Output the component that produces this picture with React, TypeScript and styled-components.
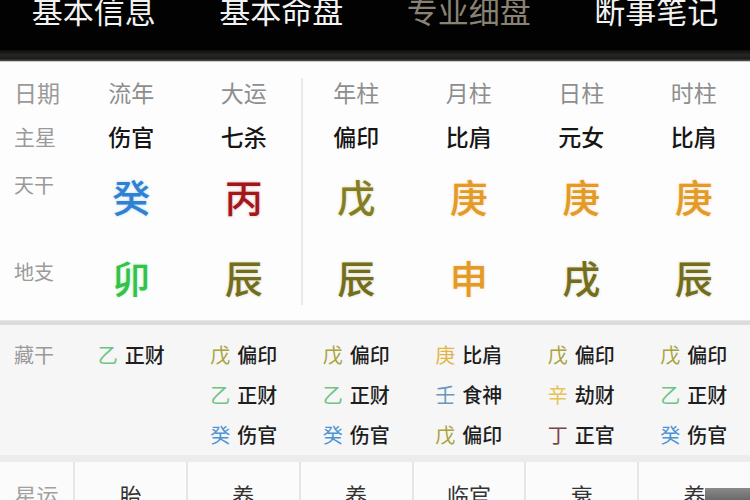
import * as React from 'react';
import styled, { createGlobalStyle } from 'styled-components';

const GlobalStyle = createGlobalStyle`
  html, body {
    margin: 0;
    padding: 0;
    background: #fdfdfd;
  }
  body {
    width: 750px;
    height: 500px;
    overflow: hidden;
    font-family: 'Noto Sans CJK SC', 'Noto Sans', sans-serif;
  }
`;

const Page = styled.div`
  position: relative;
  width: 750px;
  height: 500px;
  overflow: hidden;
  background: #fdfdfd;
`;

/* ---------- top navigation ---------- */

const Nav = styled.div`
  display: grid;
  grid-template-columns: repeat(4, 1fr);
  height: 50px;
  background: #020202;
  overflow: hidden;
`;

const NavItem = styled.div<{ $active?: boolean }>`
  margin-top: -6px;
  text-align: center;
  font-size: 31px;
  line-height: 31px;
  color: ${({ $active }) => ($active ? '#8a8272' : '#f2f2f2')};
`;

const NavShadow = styled.div`
  height: 11px;
  background: linear-gradient(
    to bottom,
    #0d0d0d 0%,
    #262624 45%,
    #1c1c1b 80%,
    #555 100%
  );
  border-bottom: 1px solid #c9c9c9;
`;

/* ---------- pillars table ---------- */

const Pillars = styled.div`
  display: flex;
  padding: 8px 0 0;
  height: 250px;
  background: #fdfdfd;
`;

const Column = styled.div<{ $label?: boolean; $divided?: boolean }>`
  position: relative;
  display: flex;
  flex-direction: column;
  align-items: center;
  ${({ $label }) =>
    $label
      ? 'width: 75px; flex: none; align-items: flex-start; padding-left: 14px; box-sizing: border-box;'
      : 'flex: 1;'}

  &::before {
    content: '';
    display: ${({ $divided }) => ($divided ? 'block' : 'none')};
    position: absolute;
    left: 1px;
    top: 8px;
    bottom: 15px;
    width: 2px;
    background: #e9e9e9;
  }
`;

const ROW_HEIGHTS = [44, 44, 74, 88];

const Cell = styled.div<{ $row: number }>`
  display: flex;
  align-items: center;
  justify-content: center;
  height: ${({ $row }) => ROW_HEIGHTS[$row]}px;
`;

const LabelText = styled.span<{ $lift?: number; $size?: number }>`
  font-size: ${({ $size }) => $size ?? 21}px;
  color: #9a9a9a;
  margin-bottom: ${({ $lift }) => ($lift ?? 0) * 2}px;
`;

const HeadText = styled.span`
  font-size: 23px;
  color: #8e8e8e;
`;

const StarText = styled.span`
  font-size: 23px;
  font-weight: 500;
  color: #161616;
`;

const BigChar = styled.span<{ $color: string }>`
  font-size: 38px;
  font-weight: 500;
  color: ${({ $color }) => $color};
  text-shadow: 0 0 3px ${({ $color }) => $color}55;
`;

/* ---------- hidden stems ---------- */

const Divider = styled.div`
  height: 4px;
  background: #dcdcdc;
  border-top: 1px solid #e8e8e8;
`;

const Hidden = styled.div`
  display: grid;
  grid-template-columns: 75px repeat(6, 1fr);
  padding-top: 9px;
  height: 121px;
  background: #f6f6f6;
`;

const HiddenCol = styled.div<{ $label?: boolean }>`
  display: flex;
  flex-direction: column;
  align-items: ${({ $label }) => ($label ? 'flex-start' : 'center')};
  padding-left: ${({ $label }) => ($label ? '14px' : '0')};
`;

const Entry = styled.div`
  display: flex;
  align-items: center;
  gap: 7px;
  height: 40px;
  font-size: 20px;
`;

const Stem = styled.span<{ $color: string }>`
  color: ${({ $color }) => $color};
`;

const God = styled.span`
  color: #1e1e1e;
  font-weight: 500;
`;

/* ---------- star luck row ---------- */

const LuckBand = styled.div`
  height: 7px;
  background: #ececec;
`;

const LuckRow = styled.div`
  display: grid;
  grid-template-columns: 73px repeat(6, 1fr);
  gap: 2px;
  height: 60px;
  background: #e6e6e6;
`;

const LuckCell = styled.div<{ $label?: boolean }>`
  display: flex;
  justify-content: center;
  padding-top: 16px;
  background: #fbfbfb;
  font-size: 22px;
  color: ${({ $label }) => ($label ? '#a0a0a0' : '#333')};
`;

const Corner = styled.div`
  position: absolute;
  right: 0;
  bottom: 0;
  width: 45px;
  height: 12px;
  background: linear-gradient(to bottom, #8a8a8a, #6a6a6a);
`;

/* ---------- data ---------- */

const GREEN = '#33c24a';
const OLIVE = '#746e1c';
const ORANGE = '#e39a26';

type Pillar = {
  head: string;
  star: string;
  gan: [string, string];
  zhi: [string, string];
  hidden: [string, string, string][];
};

const pillars: Pillar[] = [
  {
    head: '流年',
    star: '伤官',
    gan: ['癸', '#2f82d2'],
    zhi: ['卯', GREEN],
    hidden: [['乙', '正财', '#6cc485']],
  },
  {
    head: '大运',
    star: '七杀',
    gan: ['丙', '#a3171b'],
    zhi: ['辰', OLIVE],
    hidden: [
      ['戊', '偏印', '#a9a33c'],
      ['乙', '正财', '#6cc485'],
      ['癸', '伤官', '#4a93d4'],
    ],
  },
  {
    head: '年柱',
    star: '偏印',
    gan: ['戊', '#857e20'],
    zhi: ['辰', OLIVE],
    hidden: [
      ['戊', '偏印', '#a9a33c'],
      ['乙', '正财', '#6cc485'],
      ['癸', '伤官', '#4a93d4'],
    ],
  },
  {
    head: '月柱',
    star: '比肩',
    gan: ['庚', ORANGE],
    zhi: ['申', ORANGE],
    hidden: [
      ['庚', '比肩', '#e2b54a'],
      ['壬', '食神', '#6a98bc'],
      ['戊', '偏印', '#a9a33c'],
    ],
  },
  {
    head: '日柱',
    star: '元女',
    gan: ['庚', ORANGE],
    zhi: ['戌', OLIVE],
    hidden: [
      ['戊', '偏印', '#a9a33c'],
      ['辛', '劫财', '#e8c256'],
      ['丁', '正官', '#7c4444'],
    ],
  },
  {
    head: '时柱',
    star: '比肩',
    gan: ['庚', ORANGE],
    zhi: ['辰', OLIVE],
    hidden: [
      ['戊', '偏印', '#a9a33c'],
      ['乙', '正财', '#6cc485'],
      ['癸', '伤官', '#4a93d4'],
    ],
  },
];

const luck = ['胎', '养', '养', '临官', '衰', '养'];

const navItems = ['基本信息', '基本命盘', '专业细盘', '断事笔记'];

export default function App() {
  return (
    <Page>
      <GlobalStyle />
      <Nav>
        {navItems.map((item) => (
          <NavItem key={item} $active={item === '专业细盘'}>
            {item}
          </NavItem>
        ))}
      </Nav>
      <NavShadow />

      <Pillars>
        <Column $label>
          <Cell $row={0}>
            <LabelText $size={23}>日期</LabelText>
          </Cell>
          <Cell $row={1}>
            <LabelText>主星</LabelText>
          </Cell>
          <Cell $row={2}>
            <LabelText $lift={11} $size={20}>
              天干
            </LabelText>
          </Cell>
          <Cell $row={3}>
            <LabelText $lift={5} $size={20}>
              地支
            </LabelText>
          </Cell>
        </Column>
        {pillars.map((p, i) => (
          <Column key={p.head} $divided={i === 2}>
            <Cell $row={0}>
              <HeadText>{p.head}</HeadText>
            </Cell>
            <Cell $row={1}>
              <StarText>{p.star}</StarText>
            </Cell>
            <Cell $row={2}>
              <BigChar $color={p.gan[1]}>{p.gan[0]}</BigChar>
            </Cell>
            <Cell $row={3}>
              <BigChar $color={p.zhi[1]}>{p.zhi[0]}</BigChar>
            </Cell>
          </Column>
        ))}
      </Pillars>

      <Divider />

      <Hidden>
        <HiddenCol $label>
          <Entry>
            <LabelText $size={20}>藏干</LabelText>
          </Entry>
        </HiddenCol>
        {pillars.map((p) => (
          <HiddenCol key={p.head}>
            {p.hidden.map(([stem, god, color], j) => (
              <Entry key={j}>
                <Stem $color={color}>{stem}</Stem>
                <God>{god}</God>
              </Entry>
            ))}
          </HiddenCol>
        ))}
      </Hidden>

      <LuckBand />
      <LuckRow>
        <LuckCell $label>星运</LuckCell>
        {luck.map((l, i) => (
          <LuckCell key={i}>{l}</LuckCell>
        ))}
      </LuckRow>

      <Corner />
    </Page>
  );
}
